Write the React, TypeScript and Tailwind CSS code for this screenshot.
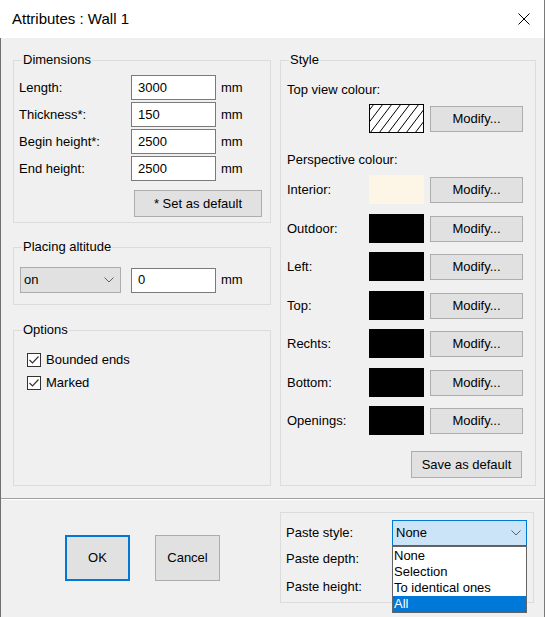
import React from 'react';

interface GroupProps {
  label?: string;
  className: string;
  children?: React.ReactNode;
}

function GroupBox({ label, className, children }: GroupProps) {
  return (
    <div className={`relative border border-[#dcdcdc] ${className}`}>
      {label && (
        <span className="absolute left-[8px] top-[-9px] bg-[#f0f0f0] px-[1px] leading-[16px]">{label}</span>
      )}
      {children}
    </div>
  );
}

function Button({ children, className }: { children: React.ReactNode; className: string }) {
  return (
    <button
      type="button"
      className={`flex items-center justify-center bg-[#e1e1e1] border border-[#adadad] leading-[16px] ${className}`}
    >
      {children}
    </button>
  );
}

function TextBox({ value }: { value: string }) {
  return (
    <div className="w-[85px] h-[25px] bg-white border border-[#7a7a7a] flex items-center pl-[6px] leading-[16px]">
      {value}
    </div>
  );
}

function Chevron() {
  return (
    <svg width="10" height="6" viewBox="0 0 10 6">
      <path d="M0.5 0.5 L5 5 L9.5 0.5" fill="none" stroke="#606060" strokeWidth="1" />
    </svg>
  );
}

function CheckBox({ label }: { label: string }) {
  return (
    <div className="flex items-center h-[16px]">
      <div className="w-[14px] h-[14px] bg-white border border-[#333333] flex items-center justify-center">
        <svg width="12" height="12" viewBox="0 0 12 12">
          <path d="M1.5 6 L4.5 9 L10.5 2.5" fill="none" stroke="#333333" strokeWidth="1.2" />
        </svg>
      </div>
      <span className="ml-[5px] leading-[16px]">{label}</span>
    </div>
  );
}

function Hatch() {
  // diagonal "/" lines, about 9px apart
  const starts = [-26, -17, -8, 1, 10, 19, 28, 37, 46];
  return (
    <svg width="55" height="29" viewBox="0 0 55 29">
      <defs>
        <clipPath id="hatch-clip">
          <rect x="1" y="1" width="53" height="27" />
        </clipPath>
      </defs>
      <rect x="0.5" y="0.5" width="54" height="28" fill="#fff" stroke="#000" />
      <g clipPath="url(#hatch-clip)">
        {starts.map((x) => (
          <line key={x} x1={x} y1={29} x2={x + 22} y2={0} stroke="#000" strokeWidth="1" />
        ))}
      </g>
    </svg>
  );
}

const dimensions = [
  { label: 'Length:', value: '3000' },
  { label: 'Thickness*:', value: '150' },
  { label: 'Begin height*:', value: '2500' },
  { label: 'End height:', value: '2500' },
];

const colours = [
  { label: 'Interior:', colour: 'bg-[#fdf5e6]', mt: 'mt-[7px]' },
  { label: 'Outdoor:', colour: 'bg-black', mt: 'mt-[10px]' },
  { label: 'Left:', colour: 'bg-black', mt: 'mt-[9px]' },
  { label: 'Top:', colour: 'bg-black', mt: 'mt-[10px]' },
  { label: 'Rechts:', colour: 'bg-black', mt: 'mt-[9px]' },
  { label: 'Bottom:', colour: 'bg-black', mt: 'mt-[10px]' },
  { label: 'Openings:', colour: 'bg-black', mt: 'mt-[9px]' },
];

const pasteOptions = ['None', 'Selection', 'To identical ones', 'All'];

export default function App() {
  return (
    <div className="w-[545px] h-[617px] flex flex-col bg-[#f0f0f0] border-r border-[#7a7a7a] overflow-hidden font-['Liberation_Sans',Arial,sans-serif] text-[13px] text-black">
      {/* title bar */}
      <div className="h-[38px] shrink-0 bg-white flex items-center justify-between pl-[12px] pr-[14px]">
        <span className="text-[15px] leading-[20px]">Attributes : Wall 1</span>
        <svg width="12" height="12" viewBox="0 0 12 12">
          <path d="M0.5 0.5 L11.5 11.5 M11.5 0.5 L0.5 11.5" stroke="#000" strokeWidth="1" />
        </svg>
      </div>

      <div className="flex-1 flex flex-col border-l border-[#6f6f6f]">
        <div className="h-[460px] shrink-0 flex pl-[12px] pt-[22px] gap-[9px]">
          {/* left column */}
          <div className="w-[258px] flex flex-col">
            <GroupBox label="Dimensions" className="h-[163px] pt-[14px] pl-[5px]">
              <div className="flex flex-col gap-[2px]">
                {dimensions.map((d) => (
                  <div key={d.label} className="flex items-center h-[25px]">
                    <span className="w-[112px] leading-[16px]">{d.label}</span>
                    <TextBox value={d.value} />
                    <span className="ml-[5px] leading-[16px]">mm</span>
                  </div>
                ))}
              </div>
              <Button className="mt-[9px] ml-[115px] w-[128px] h-[27px]">* Set as default</Button>
            </GroupBox>

            <GroupBox label="Placing altitude" className="mt-[24px] h-[58px] pt-[19px] pl-[6px]">
              <div className="flex items-center">
                <div className="w-[101px] h-[26px] bg-[#e1e1e1] border border-[#adadad] flex items-center justify-between pl-[3px] pr-[6px]">
                  <span className="leading-[16px]">on</span>
                  <Chevron />
                </div>
                <div className="ml-[10px]">
                  <TextBox value="0" />
                </div>
                <span className="ml-[5px] leading-[16px]">mm</span>
              </div>
            </GroupBox>

            <GroupBox label="Options" className="mt-[25px] h-[156px] pt-[21px] pl-[13px]">
              <div className="flex flex-col gap-[7px]">
                <CheckBox label="Bounded ends" />
                <CheckBox label="Marked" />
              </div>
            </GroupBox>
          </div>

          {/* right column */}
          <div className="w-[256px]">
            <GroupBox label="Style" className="h-[426px] pl-[6px]">
              <div className="mt-[21px] leading-[16px]">Top view colour:</div>
              <div className="mt-[6px] ml-[82px] flex items-center h-[29px]">
                <Hatch />
                <Button className="ml-[6px] w-[93px] h-[26px]">Modify...</Button>
              </div>
              <div className="mt-[19px] leading-[16px]">Perspective colour:</div>
              {colours.map((c) => (
                <div key={c.label} className={`flex items-center h-[29px] ${c.mt}`}>
                  <span className="w-[82px] leading-[16px]">{c.label}</span>
                  <div className={`w-[55px] h-[29px] ${c.colour}`} />
                  <Button className="ml-[6px] w-[93px] h-[26px]">Modify...</Button>
                </div>
              ))}
              <Button className="mt-[16px] ml-[124px] w-[111px] h-[27px]">Save as default</Button>
            </GroupBox>
          </div>
        </div>

        <div className="h-px bg-[#a0a0a0]" />
        <div className="h-px bg-white" />

        {/* bottom */}
        <div className="flex items-start pl-[64px]">
          <Button className="mt-[35px] w-[65px] h-[46px] !border-2 !border-[#0078d7]">OK</Button>
          <Button className="mt-[35px] ml-[25px] w-[65px] h-[46px]">Cancel</Button>
          <GroupBox className="mt-[12px] ml-[60px] w-[254px] h-[91px] pt-[7px] pl-[5px]">
            <div className="flex items-center h-[26px]">
              <span className="w-[106px] leading-[16px]">Paste style:</span>
              <div className="relative w-[135px] h-[26px] bg-[#cce4f7] border border-[#0078d7] flex items-center justify-between pl-[3px] pr-[5px]">
                <span className="leading-[16px]">None</span>
                <Chevron />
                <div className="absolute left-[-1px] top-[25px] w-[135px] bg-white border border-[#646464] pt-[1px] z-10">
                  {pasteOptions.map((o) => (
                    <div
                      key={o}
                      className={`h-[16px] leading-[16px] pl-[1px] ${o === 'All' ? 'bg-[#0078d7] text-white' : ''}`}
                    >
                      {o}
                    </div>
                  ))}
                </div>
              </div>
            </div>
            <div className="flex items-center h-[26px] leading-[16px]">Paste depth:</div>
            <div className="mt-[2px] flex items-center h-[26px] leading-[16px]">Paste height:</div>
          </GroupBox>
        </div>
      </div>
    </div>
  );
}
